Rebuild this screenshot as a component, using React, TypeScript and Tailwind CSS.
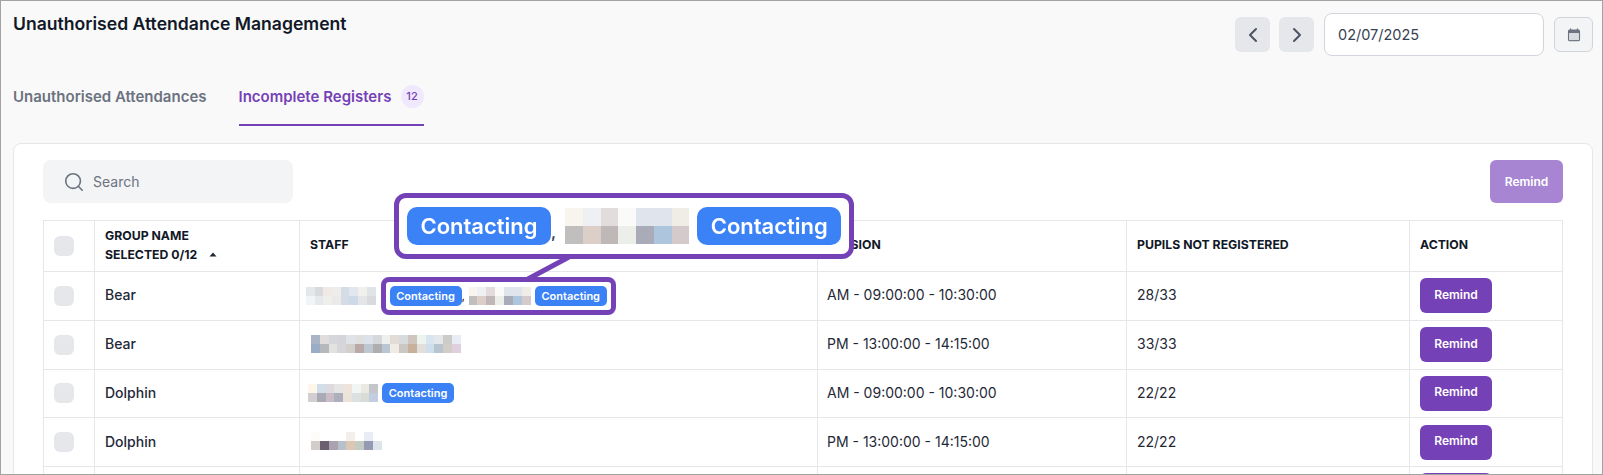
import { ChevronLeft, ChevronRight, Search } from "lucide-react";

type Rows = string[][];

const Mosaic = ({ rows, cell, height, className = "" }: { rows: Rows; cell: number; height: number; className?: string }) => (
  <div className={`shrink-0 flex flex-col ${className}`}>
    {rows.map((row, i) => (
      <div key={i} className="flex">
        {row.map((c, j) => (
          <div key={j} style={{ width: cell, height, backgroundColor: c }} />
        ))}
      </div>
    ))}
  </div>
);

const Contacting = ({ className = "" }: { className?: string }) => (
  <span className={`shrink-0 inline-flex items-center justify-center w-[72px] h-[20px] rounded-[5px] bg-[#3b82f6] text-white text-[11px] font-semibold ${className}`}>
    Contacting
  </span>
);

const RemindButton = ({ label = "Remind" }: { label?: string }) => (
  <button className="block w-[72px] h-[35px] pb-[2px] rounded-md bg-[#7541b6] text-white text-[12px] font-semibold">{label}</button>
);

const staffA: Rows = [
  ["#e4e8ea", "#d8dadd", "#f0e9e5", "#efedeb", "#d4dde6", "#e2e6ee", "#f0f0ec", "#e0e3e8"],
  ["#f2f5f7", "#e5e9ea", "#eeeeea", "#eceae8", "#d5dce6", "#ced9e8", "#e2e6e6", "#d8dade"],
];
const staffB: Rows = [
  ["#f8f5ee", "#eff0f3", "#e2dcdd", "#fafbf8", "#e0e5ed", "#e0e5ed", "#f0ede6"],
  ["#c1bfbd", "#dbcfc8", "#c0b8b8", "#eceee9", "#a9abb9", "#aec5de", "#d4cacb"],
];
const staffC: Rows = [
  ["#a9b5c6", "#e3dcdc", "#d5d7dc", "#d5d4da", "#e0e4e8", "#dfdfdf", "#dbe2ec", "#d6d8dc", "#eef0ee", "#e2dbd6", "#d7dbdd", "#cfc5be", "#edf3ef", "#d8e4f0", "#e4e8ea", "#cbcbc8", "#e8ecf4"],
  ["#9aacc6", "#b5b8bd", "#e3e2e0", "#d6d6da", "#d3cfcd", "#b9aaa9", "#bcc7d0", "#aeadb0", "#b9c7d3", "#f0ece5", "#cbc8c3", "#c7b09c", "#e0dfdb", "#cfdeec", "#b8c5d1", "#d3cdc8", "#ded0de"],
];
const staffD: Rows = [
  ["#fdf6e9", "#d2deea", "#dcdadf", "#e5e5e3", "#efe4dc", "#f0f6f3", "#ece8e4", "#c4c6cb"],
  ["#d3cfd0", "#a9aab6", "#c9bcc6", "#adb0ba", "#ebe3da", "#dbe1e0", "#d8dbd6", "#c2cde0"],
];
const staffE: Rows = [
  ["#fdfcf8", "#ffffff", "#ffffff", "#ffffff", "#f4efeb", "#ffffff", "#e9ecf5", "#ffffff"],
  ["#d2cdc8", "#6b5f70", "#a8a3af", "#b7c1cb", "#dcc7b4", "#c2ccc2", "#959ab4", "#dde4ea"],
];

const rows = [
  {
    group: "Bear",
    session: "AM - 09:00:00 - 10:30:00",
    pupils: "28/33",
    staff: (
      <div className="flex items-center pl-[6px]">
        <Mosaic rows={staffA} cell={8.7} height={9} />
        <Contacting className="ml-[14px]" />
        <span className="w-[7px] text-[12px]">,</span>
        <Mosaic rows={staffB} cell={8.9} height={9} />
        <Contacting className="ml-[4px]" />
      </div>
    ),
  },
  {
    group: "Bear",
    session: "PM - 13:00:00 - 14:15:00",
    pupils: "33/33",
    staff: <Mosaic rows={staffC} cell={8.82} height={9} className="ml-[11px] -mt-[2px]" />,
  },
  {
    group: "Dolphin",
    session: "AM - 09:00:00 - 10:30:00",
    pupils: "22/22",
    staff: (
      <div className="flex items-center pl-[8px]">
        <Mosaic rows={staffD} cell={8.75} height={9} />
        <Contacting className="ml-[4px]" />
      </div>
    ),
  },
  {
    group: "Dolphin",
    session: "PM - 13:00:00 - 14:15:00",
    pupils: "22/22",
    staff: <Mosaic rows={staffE} cell={8.85} height={9} className="ml-[11px] -mt-[2px]" />,
  },
];

export default function App() {
  return (
    <div className="relative h-[475px] overflow-hidden border border-[#a3a3a3] bg-[#f9f9f9] font-['Inter',sans-serif] text-[#111827]">
      {/* Header */}
      <div className="flex items-start justify-between pl-[12px] pr-[9px] pt-[12px]">
        <h1 className="text-[17.6px] leading-[22px] font-semibold">Unauthorised Attendance Management</h1>
        <div className="flex items-center gap-[9px]">
          <button className="flex h-[35px] w-[35px] items-center justify-center rounded-md bg-[#e5e7eb] text-[#4b5563]">
            <ChevronLeft size={24} strokeWidth={2} />
          </button>
          <button className="flex h-[35px] w-[35px] items-center justify-center rounded-md bg-[#e5e7eb] text-[#4b5563]">
            <ChevronRight size={24} strokeWidth={2} />
          </button>
          <div className="ml-[1px] flex h-[43px] w-[220px] items-center rounded-lg border border-[#d1d5db] bg-white pl-[13px] text-[14.5px] text-[#374151]">
            02/07/2025
          </div>
          <button className="ml-[1px] flex h-[35px] w-[39px] items-center justify-center rounded-md border border-[#d1d5db] bg-[#f3f4f6]">
            <svg width="14" height="14" viewBox="0 0 14 14" fill="none">
              <path d="M3.5 0.5v2M10.5 0.5v2" stroke="#6b7280" strokeWidth="1.3" />
              <rect x="1.6" y="2.1" width="10.8" height="10.6" rx="1.2" stroke="#6b7280" strokeWidth="1.3" />
              <rect x="1.6" y="2.1" width="10.8" height="3" fill="#6b7280" />
              <rect x="2.3" y="5.1" width="9.4" height="7" fill="#d9dbe0" />
            </svg>
          </button>
        </div>
      </div>

      {/* Tabs */}
      <div className="mt-[26px] flex pl-[12px] text-[15px] font-semibold">
        <div className="flex h-[44px] items-start pt-[4px] text-[#6b7280]">Unauthorised Attendances</div>
        <div className="ml-[32px] flex h-[44px] w-[185px] items-start justify-between border-b-2 border-[#7541b6] text-[#7541b6]">
          <span className="pt-[4px]">Incomplete Registers</span>
          <span className="mt-[3px] flex h-[23px] w-[23px] items-center justify-center rounded-full bg-[#f0e8fd] text-[11px] font-medium">12</span>
        </div>
      </div>

      {/* Card */}
      <div className="ml-[12px] mr-[9px] mt-[17px] rounded-lg border border-[#e5e7eb] bg-white pl-[29px] pr-[29px] pt-[16px]">
        <div className="flex justify-between">
          <div className="flex h-[43px] w-[250px] items-center gap-[8px] rounded-lg bg-[#f3f4f6] pl-[20px] text-[14px] text-[#6b7280]">
            <Search size={22} strokeWidth={1.75} />
            Search
          </div>
          <button className="h-[43px] w-[73px] rounded-md bg-[#a785d2] text-[12px] font-semibold text-white">Remind</button>
        </div>

        <table className="mt-[17px] w-[1519px] table-fixed border-collapse text-[14px]">
          <colgroup>
            <col className="w-[51px]" />
            <col className="w-[205px]" />
            <col className="w-[518px]" />
            <col className="w-[309px]" />
            <col className="w-[283px]" />
            <col className="w-[153px]" />
          </colgroup>
          <thead>
            <tr className="h-[51px] text-left text-[12.25px]">
              <th className="border border-[#e5e7eb] pl-[10px]">
                <div className="h-[20px] w-[20px] rounded-[6px] bg-[#e5e7eb]" />
              </th>
              <th className="border border-[#e5e7eb] pb-[2px] pl-[10px] font-bold leading-[19px]">
                GROUP NAME
                <div className="flex items-center gap-[12px]">
                  SELECTED 0/12
                  <svg width="8" height="5" viewBox="0 0 8 5">
                    <path d="M4 0.5L7.5 4.5H0.5z" fill="#1f2937" />
                  </svg>
                </div>
              </th>
              <th className="border border-[#e5e7eb] pb-[2px] pl-[10px] font-bold">STAFF</th>
              <th className="border border-[#e5e7eb] pb-[2px] pl-[9px] font-bold">SESSION</th>
              <th className="border border-[#e5e7eb] pb-[2px] pl-[10px] font-bold">PUPILS NOT REGISTERED</th>
              <th className="border border-[#e5e7eb] pb-[2px] pl-[10px] font-bold">ACTION</th>
            </tr>
          </thead>
          <tbody>
            {rows.map((row, i) => (
              <tr key={i} className="h-[48.75px]">
                <td className="border border-[#e5e7eb] pl-[10px]">
                  <div className="h-[20px] w-[20px] rounded-[6px] bg-[#e5e7eb]" />
                </td>
                <td className="border border-[#e5e7eb] pb-[2px] pl-[10px] font-medium text-[#1f2937]">{row.group}</td>
                <td className="border border-[#e5e7eb]">{row.staff}</td>
                <td className="border border-[#e5e7eb] pb-[2px] pl-[9px] text-[#1f2937]">{row.session}</td>
                <td className="border border-[#e5e7eb] pb-[2px] pl-[10px] text-[#1f2937]">{row.pupils}</td>
                <td className="border border-[#e5e7eb] pl-[10px]">
                  <RemindButton />
                </td>
              </tr>
            ))}
            <tr className="h-[48.75px]">
              <td className="border border-[#e5e7eb]" />
              <td className="border border-[#e5e7eb]" />
              <td className="border border-[#e5e7eb]" />
              <td className="border border-[#e5e7eb]" />
              <td className="border border-[#e5e7eb]" />
              <td className="border border-[#e5e7eb] pl-[10px]">
                <RemindButton label="" />
              </td>
            </tr>
          </tbody>
        </table>
      </div>

      {/* Annotation over the staff column */}
      <svg className="absolute left-[525px] top-[255px]" width="46" height="24" viewBox="0 0 46 24">
        <line x1="2" y1="23" x2="43" y2="1" stroke="#7541b6" strokeWidth="5" />
      </svg>
      <div className="absolute left-[380px] top-[276px] h-[38px] w-[235px] rounded-lg border-[5px] border-[#7541b6]" />
      <div className="absolute left-[393px] top-[192px] flex h-[66px] w-[460px] items-center rounded-xl border-[5px] border-[#7541b6] bg-white pl-[8px]">
        <span className="flex h-[38px] w-[144px] shrink-0 items-center justify-center rounded-[10px] bg-[#3b82f6] text-[22px] font-semibold text-white blur-[0.4px]">
          Contacting
        </span>
        <span className="mt-[12px] w-[14px] text-[16px] font-semibold text-[#374151]">,</span>
        <Mosaic rows={staffB} cell={17.75} height={18} />
        <span className="ml-[8px] flex h-[38px] w-[144px] shrink-0 items-center justify-center rounded-[10px] bg-[#3b82f6] text-[22px] font-semibold text-white blur-[0.4px]">
          Contacting
        </span>
      </div>
    </div>
  );
}
